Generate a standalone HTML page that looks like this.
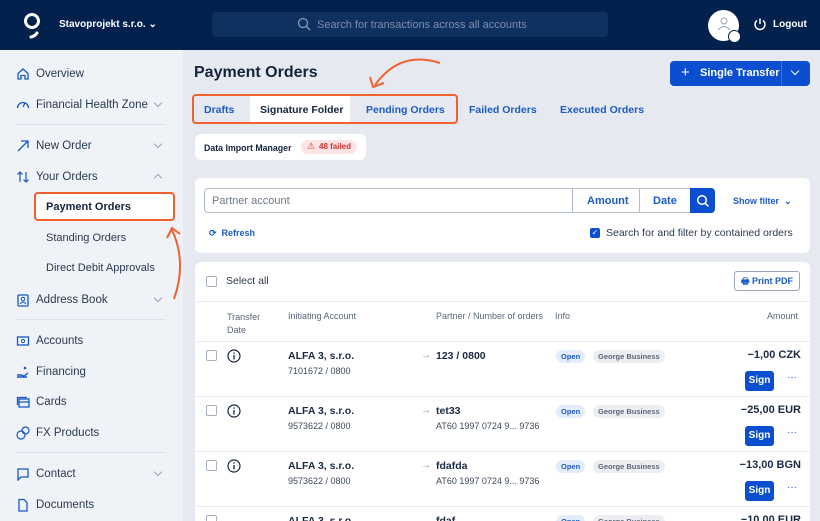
<!DOCTYPE html>
<html style="width:820px;height:521px;overflow:hidden"><head><meta charset="utf-8"><style>
*{box-sizing:border-box;margin:0;padding:0}
body{width:820px;height:521px;overflow:hidden;font-family:"Liberation Sans",sans-serif;background:#e6eaf0;position:relative;color:#1b2a44}
.abs{position:absolute}
.hdr{left:0;top:0;width:820px;height:50px;background:#03214d}
.side{left:0;top:50px;width:183px;height:471px;background:#eff2f6}
.nav{position:absolute;left:16px;font-size:11.5px;color:#2b3a52;display:flex;align-items:center;gap:6px}
.ico{width:14px;height:14px;display:inline-block}
.chev{position:absolute;left:155px;width:6px;height:6px;border-right:1px solid #9aa5b5;border-bottom:1px solid #9aa5b5;transform:rotate(45deg)}
.sub{position:absolute;left:46px;font-size:11px;color:#2b3a52}
.sep{position:absolute;left:16px;width:150px;height:1px;background:#dde2ea}
.card{background:#fff;border-radius:6px}
.tab{position:absolute;top:104px;font-size:10.5px;font-weight:bold;color:#1c5bc5}
.row{position:absolute;left:195px;width:615px;height:55px;background:#fff;border-top:1px solid #e8ecf1}
.cb{position:absolute;width:11px;height:11px;border:1px solid #a7b0bd;border-radius:2px;background:#fff}
.pill{position:absolute;font-size:7.5px;font-weight:bold;padding:2px 5px;border-radius:7px}
.sign{position:absolute;left:550px;width:29px;height:20px;background:#0b4fd0;border-radius:3px;color:#fff;font-size:10px;font-weight:bold;text-align:center;line-height:20px}
.h{position:absolute;top:311px;font-size:9px;color:#5a6678}
</style></head><body>
<div class="abs hdr"></div>
<svg class="abs" style="left:22px;top:12px" width="22" height="28" viewBox="0 0 22 28"><circle cx="10" cy="9" r="6.5" fill="none" stroke="#fff" stroke-width="3"/><path d="M15 21 Q13 24 9 25" fill="none" stroke="#fff" stroke-width="3" stroke-linecap="round"/></svg>
<div class="abs" style="left:59px;top:19px;color:#fff;font-size:10px;font-weight:bold">Stavoprojekt s.r.o. ⌄</div>
<div class="abs" style="left:212px;top:12px;width:396px;height:25px;background:#0f3160;border-radius:4px"></div>
<svg class="abs" style="left:297px;top:17px" width="14" height="14"><circle cx="6" cy="6" r="4.5" fill="none" stroke="#8b9bb4" stroke-width="1.3"/><path d="M9.5 9.5L13 13" stroke="#8b9bb4" stroke-width="1.3"/></svg>
<div class="abs" style="left:317px;top:19px;font-size:11px;color:#7d8ea9">Search for transactions across all accounts</div>
<div class="abs" style="left:708px;top:10px;width:31px;height:31px;border-radius:50%;background:#fff"></div>
<svg class="abs" style="left:716px;top:16px" width="16" height="16"><circle cx="8" cy="5" r="3" fill="none" stroke="#9aa5b5"/><path d="M2 14 Q8 7 14 14" fill="none" stroke="#9aa5b5"/></svg>
<div class="abs" style="left:728px;top:30px;width:13px;height:13px;border-radius:50%;background:#fff;border:1.5px solid #03214d"></div>
<svg class="abs" style="left:753px;top:17px" width="14" height="14"><path d="M4 3.5A5 5 0 1 0 10 3.5" fill="none" stroke="#fff" stroke-width="1.5"/><path d="M7 1.5V7" stroke="#fff" stroke-width="1.5"/></svg>
<div class="abs" style="left:773px;top:19px;color:#fff;font-size:10px;font-weight:bold">Logout</div>

<div class="abs side"></div>
<div class="nav" style="top:67px"><svg class="ico" viewBox="0 0 14 14"><path d="M2 6.5L7 2l5 4.5V12H9V8.5H5V12H2z" fill="none" stroke="#1657c9" stroke-width="1.3"/></svg><span>Overview</span></div>
<div class="nav" style="top:98px"><svg class="ico" viewBox="0 0 14 14"><path d="M1.5 10A5.5 5.5 0 1 1 12.5 10" fill="none" stroke="#1657c9" stroke-width="1.3"/><path d="M7 9L9 5" stroke="#1657c9" stroke-width="1.2"/></svg><span>Financial Health Zone</span></div>
<div class="chev" style="top:100px"></div>
<div class="sep" style="top:124px"></div>
<div class="nav" style="top:139px"><svg class="ico" viewBox="0 0 14 14"><path d="M2 12L12 2M5 2h7v7" fill="none" stroke="#1657c9" stroke-width="1.3"/></svg><span>New Order</span></div>
<div class="chev" style="top:141px"></div>
<div class="nav" style="top:170px"><svg class="ico" viewBox="0 0 14 14"><path d="M4 12V2M1.5 4.5L4 2l2.5 2.5M10 2v10M7.5 9.5L10 12l2.5-2.5" fill="none" stroke="#1657c9" stroke-width="1.2"/></svg><span>Your Orders</span></div>
<div class="chev" style="top:175px;transform:rotate(225deg)"></div>
<div class="abs" style="left:34px;top:192px;width:141px;height:29px;border:2.5px solid #f0612f;border-radius:4px;background:#fff"></div>
<div class="sub" style="top:201px;font-weight:bold;color:#14233c">Payment Orders</div>
<div class="sub" style="top:232px">Standing Orders</div>
<div class="sub" style="top:262px">Direct Debit Approvals</div>
<div class="nav" style="top:293px"><svg class="ico" viewBox="0 0 14 14"><rect x="2" y="2" width="10" height="11" rx="1" fill="none" stroke="#1657c9" stroke-width="1.3"/><circle cx="7" cy="6" r="1.8" fill="none" stroke="#1657c9"/><path d="M4 11Q7 7 10 11" fill="none" stroke="#1657c9"/></svg><span>Address Book</span></div>
<div class="chev" style="top:295px"></div>
<div class="sep" style="top:319px"></div>
<div class="nav" style="top:334px"><svg class="ico" viewBox="0 0 14 14"><rect x="1.5" y="3" width="11" height="8" fill="none" stroke="#1657c9" stroke-width="1.3"/><circle cx="7" cy="7" r="1.6" fill="none" stroke="#1657c9"/></svg><span>Accounts</span></div>
<div class="nav" style="top:365px"><svg class="ico" viewBox="0 0 14 14"><path d="M1 10h4l3 1 4-3M1 12h10" fill="none" stroke="#1657c9" stroke-width="1.4"/><circle cx="9" cy="3" r="1.3" fill="#1657c9"/></svg><span>Financing</span></div>
<div class="nav" style="top:395px"><svg class="ico" viewBox="0 0 14 14"><rect x="3" y="4" width="10" height="8" fill="none" stroke="#1657c9" stroke-width="1.3"/><path d="M1.5 10V2.5H11M3 7h10" fill="none" stroke="#1657c9" stroke-width="1.3"/></svg><span>Cards</span></div>
<div class="nav" style="top:426px"><svg class="ico" viewBox="0 0 14 14"><circle cx="5" cy="9" r="4" fill="none" stroke="#1657c9" stroke-width="1.2"/><circle cx="9.5" cy="4.5" r="3.5" fill="none" stroke="#1657c9" stroke-width="1.2"/></svg><span>FX Products</span></div>
<div class="sep" style="top:452px"></div>
<div class="nav" style="top:467px"><svg class="ico" viewBox="0 0 14 14"><path d="M2 2h10v8H5l-3 3z" fill="none" stroke="#1657c9" stroke-width="1.3"/></svg><span>Contact</span></div>
<div class="chev" style="top:469px"></div>
<div class="nav" style="top:498px"><svg class="ico" viewBox="0 0 14 14"><path d="M3 1.5h5l3 3V13H3z" fill="none" stroke="#1657c9" stroke-width="1.3"/></svg><span>Documents</span></div>

<div class="abs" style="left:194px;top:64px;font-size:16px;font-weight:bold;color:#14233c">Payment Orders</div>
<div class="abs" style="left:670px;top:61px;width:140px;height:25px;background:#0b4fd0;border-radius:4px"></div>
<div class="abs" style="left:781px;top:61px;width:1px;height:25px;background:#3a72d8"></div>
<div class="abs" style="left:681px;top:64px;color:#fff;font-size:15px">+</div>
<div class="abs" style="left:700px;top:67px;color:#fff;font-size:11px;font-weight:bold">Single Transfer</div>
<div class="abs" style="left:792px;top:68px;width:6px;height:6px;border-right:1.5px solid #fff;border-bottom:1.5px solid #fff;transform:rotate(45deg)"></div>

<svg class="abs" style="left:360px;top:55px" width="90" height="40"><path d="M80 8 Q40 -5 15 30" fill="none" stroke="#f0612f" stroke-width="2"/><path d="M10 22 L13 32 L24 28" fill="none" stroke="#f0612f" stroke-width="2"/></svg>
<svg class="abs" style="left:162px;top:222px" width="30" height="80"><path d="M12 77 Q25 40 10 8" fill="none" stroke="#f0612f" stroke-width="2"/><path d="M5 16 L10 6 L18 12" fill="none" stroke="#f0612f" stroke-width="2"/></svg>

<div class="abs" style="left:250px;top:96px;width:100px;height:26px;background:#fff"></div>
<div class="abs" style="left:192px;top:94px;width:266px;height:30px;border:2.5px solid #f0612f;border-radius:4px"></div>
<div class="tab" style="left:204px">Drafts</div>
<div class="tab" style="left:260px;color:#14233c">Signature Folder</div>
<div class="tab" style="left:366px">Pending Orders</div>
<div class="tab" style="left:469px">Failed Orders</div>
<div class="tab" style="left:560px">Executed Orders</div>

<div class="abs card" style="left:195px;top:134px;width:171px;height:26px"></div>
<div class="abs" style="left:204px;top:143px;font-size:8.8px;font-weight:bold;color:#14233c">Data Import Manager</div>
<div class="abs" style="left:301px;top:140px;width:56px;height:14px;background:#fde4e4;border-radius:7px;font-size:8px;color:#d0322c;font-weight:bold;line-height:14px;padding-left:18px">48 failed</div>
<div class="abs" style="left:307px;top:141px;font-size:9px;color:#d0322c">⚠</div>

<div class="abs card" style="left:195px;top:178px;width:615px;height:75px"></div>
<div class="abs" style="left:204px;top:188px;width:487px;height:25px;border:1px solid #b4bdca;border-radius:4px 0 0 4px"></div>
<div class="abs" style="left:572px;top:188px;width:1px;height:25px;background:#b4bdca"></div>
<div class="abs" style="left:639px;top:188px;width:1px;height:25px;background:#b4bdca"></div>
<div class="abs" style="left:212px;top:195px;font-size:11px;color:#6b778a">Partner account</div>
<div class="abs" style="left:587px;top:195px;font-size:11px;font-weight:bold;color:#1c5bc5">Amount</div>
<div class="abs" style="left:653px;top:195px;font-size:11px;font-weight:bold;color:#1c5bc5">Date</div>
<div class="abs" style="left:690px;top:188px;width:25px;height:25px;background:#0b4fd0;border-radius:0 4px 4px 0"></div>
<svg class="abs" style="left:696px;top:194px" width="14" height="14"><circle cx="6" cy="6" r="4.3" fill="none" stroke="#fff" stroke-width="1.5"/><path d="M9.3 9.3L12.5 12.5" stroke="#fff" stroke-width="1.5"/></svg>
<div class="abs" style="left:733px;top:196px;font-size:9px;font-weight:bold;color:#1c5bc5">Show filter &nbsp;⌄</div>
<div class="abs" style="left:209px;top:228px;font-size:9px;font-weight:bold;color:#1c5bc5">⟳ &nbsp;Refresh</div>
<div class="abs" style="left:590px;top:228px;width:10px;height:10px;background:#0b4fd0;border-radius:2px;color:#fff;font-size:8px;line-height:10px;text-align:center">✓</div>
<div class="abs" style="left:606px;top:227px;font-size:10.5px;color:#2b3a52">Search for and filter by contained orders</div>

<div class="abs" style="left:195px;top:262px;width:615px;height:259px;background:#fff;border-radius:6px 6px 0 0"></div>
<div class="cb" style="left:206px;top:276px"></div>
<div class="abs" style="left:226px;top:275px;font-size:10.5px;color:#2b3a52">Select all</div>
<div class="abs" style="left:734px;top:271px;width:66px;height:20px;border:1px solid #9aa5b5;border-radius:3px;font-size:9px;font-weight:bold;color:#1c5bc5;line-height:18px;padding-left:6px">🖶 Print PDF</div>
<div class="abs" style="left:195px;top:301px;width:615px;height:1px;background:#e8ecf1"></div>
<div class="h" style="left:227px;line-height:13px">Transfer<br>Date</div>
<div class="h" style="left:288px">Initiating Account</div>
<div class="h" style="left:436px">Partner / Number of orders</div>
<div class="h" style="left:555px">Info</div>
<div class="h" style="left:767px">Amount</div>

<div class="row" style="top:341px">
 <div class="cb" style="left:11px;top:8px"></div>
 <svg class="abs" style="left:32px;top:7px" width="14" height="14"><circle cx="7" cy="7" r="6" fill="none" stroke="#14233c" stroke-width="1.2"/><path d="M7 6v4.5" stroke="#14233c" stroke-width="1.3"/><circle cx="7" cy="4" r=".8" fill="#14233c"/></svg>
 <div class="abs" style="left:93px;top:8px;font-size:10.5px;font-weight:bold">ALFA 3, s.r.o.</div>
 <div class="abs" style="left:93px;top:24px;font-size:9px;color:#3b475a">7101672 / 0800</div>
 <div class="abs" style="left:226px;top:8px;font-size:10px;color:#8a94a3">→</div>
 <div class="abs" style="left:241px;top:8px;font-size:10.5px;font-weight:bold">123 / 0800</div>
 <div class="pill" style="left:361px;top:8px;background:#e3ecfa;color:#1c5bc5">Open</div>
 <div class="pill" style="left:398px;top:8px;background:#eceef2;color:#5a6678">George Business</div>
 <div class="abs" style="left:540px;top:7px;font-size:11px;font-weight:bold;width:66px;text-align:right">−1,00 CZK</div>
 <div class="sign" style="top:29px">Sign</div>
 <div class="abs" style="left:592px;top:30px;font-size:10px;color:#1c5bc5">···</div>
</div>
<div class="row" style="top:396px">
 <div class="cb" style="left:11px;top:8px"></div>
 <svg class="abs" style="left:32px;top:7px" width="14" height="14"><circle cx="7" cy="7" r="6" fill="none" stroke="#14233c" stroke-width="1.2"/><path d="M7 6v4.5" stroke="#14233c" stroke-width="1.3"/><circle cx="7" cy="4" r=".8" fill="#14233c"/></svg>
 <div class="abs" style="left:93px;top:8px;font-size:10.5px;font-weight:bold">ALFA 3, s.r.o.</div>
 <div class="abs" style="left:93px;top:24px;font-size:9px;color:#3b475a">9573622 / 0800</div>
 <div class="abs" style="left:226px;top:8px;font-size:10px;color:#8a94a3">→</div>
 <div class="abs" style="left:241px;top:8px;font-size:10.5px;font-weight:bold">tet33</div>
 <div class="abs" style="left:241px;top:24px;font-size:9px;color:#3b475a">AT60 1997 0724 9... 9736</div>
 <div class="pill" style="left:361px;top:8px;background:#e3ecfa;color:#1c5bc5">Open</div>
 <div class="pill" style="left:398px;top:8px;background:#eceef2;color:#5a6678">George Business</div>
 <div class="abs" style="left:520px;top:7px;font-size:11px;font-weight:bold;width:86px;text-align:right">−25,00 EUR</div>
 <div class="sign" style="top:29px">Sign</div>
 <div class="abs" style="left:592px;top:30px;font-size:10px;color:#1c5bc5">···</div>
</div>
<div class="row" style="top:451px">
 <div class="cb" style="left:11px;top:8px"></div>
 <svg class="abs" style="left:32px;top:7px" width="14" height="14"><circle cx="7" cy="7" r="6" fill="none" stroke="#14233c" stroke-width="1.2"/><path d="M7 6v4.5" stroke="#14233c" stroke-width="1.3"/><circle cx="7" cy="4" r=".8" fill="#14233c"/></svg>
 <div class="abs" style="left:93px;top:8px;font-size:10.5px;font-weight:bold">ALFA 3, s.r.o.</div>
 <div class="abs" style="left:93px;top:24px;font-size:9px;color:#3b475a">9573622 / 0800</div>
 <div class="abs" style="left:226px;top:8px;font-size:10px;color:#8a94a3">→</div>
 <div class="abs" style="left:241px;top:8px;font-size:10.5px;font-weight:bold">fdafda</div>
 <div class="abs" style="left:241px;top:24px;font-size:9px;color:#3b475a">AT60 1997 0724 9... 9736</div>
 <div class="pill" style="left:361px;top:8px;background:#e3ecfa;color:#1c5bc5">Open</div>
 <div class="pill" style="left:398px;top:8px;background:#eceef2;color:#5a6678">George Business</div>
 <div class="abs" style="left:520px;top:7px;font-size:11px;font-weight:bold;width:86px;text-align:right">−13,00 BGN</div>
 <div class="sign" style="top:29px">Sign</div>
 <div class="abs" style="left:592px;top:30px;font-size:10px;color:#1c5bc5">···</div>
</div>
<div class="row" style="top:506px;height:15px;overflow:hidden">
 <div class="cb" style="left:11px;top:8px"></div>
 <div class="abs" style="left:93px;top:8px;font-size:10.5px;font-weight:bold">ALFA 3, s.r.o.</div>
 <div class="abs" style="left:241px;top:8px;font-size:10.5px;font-weight:bold">fdaf</div>
 <div class="pill" style="left:361px;top:8px;background:#e3ecfa;color:#1c5bc5">Open</div>
 <div class="pill" style="left:398px;top:8px;background:#eceef2;color:#5a6678">George Business</div>
 <div class="abs" style="left:520px;top:7px;font-size:11px;font-weight:bold;width:86px;text-align:right">−10,00 EUR</div>
</div>
</body></html>
